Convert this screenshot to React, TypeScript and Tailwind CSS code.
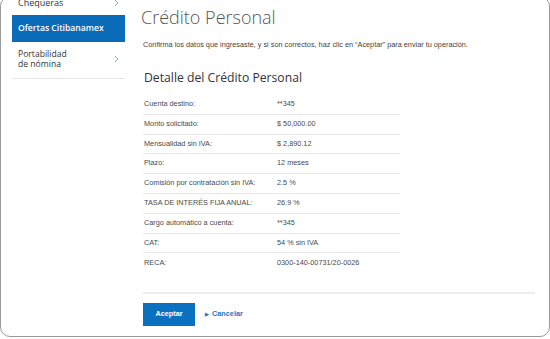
import React from 'react';

const rows: [string, string][] = [
  ['Cuenta destino:', '**345'],
  ['Monto solicitado:', '$ 50,000.00'],
  ['Mensualidad sin IVA:', '$ 2,890.12'],
  ['Plazo:', '12 meses'],
  ['Comisión por contratación sin IVA:', '2.5 %'],
  ['TASA DE INTERÉS FIJA ANUAL:', '26.9 %'],
  ['Cargo automático a cuenta:', '**345'],
  ['CAT:', '54 % sin IVA'],
  ['RECA:', '0300-140-00731/20-0026'],
];

function Chevron() {
  return (
    <svg width="5" height="8" viewBox="0 0 5 8" fill="none" className="shrink-0">
      <polyline points="1,1 4,4 1,7" stroke="#7fb0da" strokeWidth="1" />
    </svg>
  );
}

function Sidebar() {
  return (
    <aside className="w-[124px] shrink-0 pl-[11px] font-['Open_Sans',sans-serif]">
      <div className="flex h-[18px] items-center justify-between pb-[6px] pl-[6px] pr-[6px] text-[9px] text-[#333]">
        <span>Chequeras</span>
        <Chevron />
      </div>
      <div className="flex h-[27px] items-center bg-[#0a6cb8] px-[6px] text-[8.6px] font-semibold text-white">
        Ofertas Citibanamex
      </div>
      <div className="flex h-[37px] items-center justify-between border-b border-[#e6e6e6] pl-[6px] pr-[6px] pb-[3px] pt-[1px] text-[8.6px] leading-[10px] text-[#333]">
        <span>
          Portabilidad
          <br />
          de nómina
        </span>
        <Chevron />
      </div>
    </aside>
  );
}

export default function App() {
  return (
    <div className="h-[339px] w-[550px] overflow-hidden bg-white">
      <div className="-mt-[4px] flex h-[341px] rounded-[10px] border border-[#9a9a9a] bg-white">
        <Sidebar />
        <main className="flex-1 pl-[16px] pr-[14px]">
          <h1 className="pt-[9px] font-['Open_Sans',sans-serif] text-[18px] font-light leading-[22px] text-[#555]">
            Crédito Personal
          </h1>
          <p className="mt-[12px] pl-[2px] font-['Liberation_Sans',Arial,sans-serif] text-[7.3px] leading-[9px] text-[#444]">
            Confirma los datos que ingresaste, y si son correctos, haz clic en “Aceptar” para enviar tu operación.
          </p>
          <h2 className="mt-[21px] pl-[3px] font-['Open_Sans',sans-serif] text-[12.2px] leading-[16px] text-[#333]">
            Detalle del Crédito Personal
          </h2>
          <div className="mt-[9px] ml-[2px] w-[257px] divide-y divide-[#e8e8e8] font-['Liberation_Sans',Arial,sans-serif] text-[7.3px] text-[#4a4a4a]">
            {rows.map(([label, value]) => (
              <div key={label} className="flex h-[19.8px] items-center pl-[1px]">
                <span className="w-[133px] shrink-0">{label}</span>
                <span>{value}</span>
              </div>
            ))}
          </div>
          <div className="mt-[19px] ml-[2px] h-[2px] bg-[#ececec]" />
          <div className="mt-[9px] ml-[2px] flex items-center gap-[10px] font-['Liberation_Sans',Arial,sans-serif] text-[7.3px] font-bold">
            <button className="h-[23px] w-[52px] bg-[#0a70c0] text-white">Aceptar</button>
            <span className="flex items-center gap-[3px] text-[#1b78c2]">
              <span className="text-[5px]">▶</span>
              Cancelar
            </span>
          </div>
        </main>
      </div>
    </div>
  );
}
